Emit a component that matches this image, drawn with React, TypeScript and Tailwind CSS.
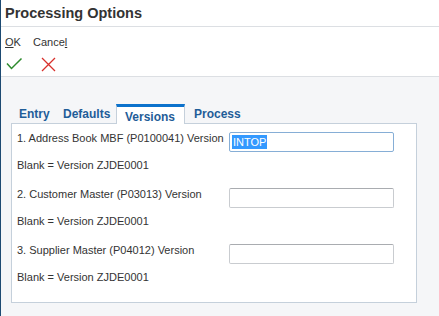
import React from "react";

const labelCls = "text-[11px] leading-[14px] text-[#333333]";

function Row({ label, value, focused }: { label: string; value?: string; focused?: boolean }) {
  return (
    <div className="flex flex-col">
      <div className="flex items-start h-[28px]">
        <div className={`${labelCls} w-[212px] pt-[6px]`}>{label}</div>
        <div
          className={`w-[165px] h-[20px] mt-[7px] rounded-[2px] bg-white flex items-center px-[2px] border shrink-0 ${
            focused ? "border-[#86aed6]" : "border-[#c9ccd0] border-t-[#a9acb0]"
          }`}
        >
          {value ? (
            <span className="bg-[#3399ff] text-white text-[11px] leading-[14px] px-[1px]">{value}</span>
          ) : null}
        </div>
      </div>
      <div className={`${labelCls} h-[28px] pt-[5px]`}>Blank = Version ZJDE0001</div>
    </div>
  );
}

export default function App() {
  return (
    <div className="w-[439px] h-[316px] bg-[#f5f6f8] border-l border-[#1d4a72] flex flex-col font-['Liberation_Sans',Arial,sans-serif] overflow-hidden">
      <div className="bg-white h-[27px] border-b border-[#dcdfe3] pl-[4px] flex items-center">
        <span className="text-[14.5px] font-bold text-[#333333] leading-none pt-[1px]">Processing Options</span>
      </div>
      <div className="bg-white h-[50px] border-b border-[#dcdfe3] pl-[4px] pt-[9px]">
        <div className="flex text-[11px] leading-[12px] text-[#333333]">
          <span className="w-[28px]">
            <span className="underline">O</span>K
          </span>
          <span>
            Cance<span className="underline">l</span>
          </span>
        </div>
        <div className="flex mt-[8px] h-[16px] items-center">
          <svg width="17" height="14" viewBox="0 0 17 14" className="ml-[1px]">
            <path d="M1 6.5 L5.5 11.5 L15.5 1.5" stroke="#2c8a2c" strokeWidth="1.5" fill="none" />
          </svg>
          <svg width="15" height="15" viewBox="0 0 15 15" className="ml-[18px]">
            <path d="M1 1 L14 14 M14 1 L1 14" stroke="#d8302c" strokeWidth="1.3" fill="none" />
          </svg>
        </div>
      </div>
      <div className="pl-[10px] pt-[26px]">
        <div className="flex items-end h-[20px] text-[12px] font-bold text-[#1f5d98]">
          <div className="pl-[8px] w-[52px]">Entry</div>
          <div className="w-[53px]">Defaults</div>
          <div className="w-[69px] h-[20px] bg-white border-x border-t-[3px] border-[#c5d0db] border-t-[#0c72cc] -mb-px relative z-10 pl-[8px] pt-[1px]">
            Versions
          </div>
          <div className="pl-[9px]">Process</div>
        </div>
        <div className="w-[406px] h-[180px] bg-white border border-[#c5d0db] pl-[5px] pt-[1px]">
          <Row label="1. Address Book MBF (P0100041) Version" value="INTOP" focused />
          <Row label="2. Customer Master (P03013) Version" />
          <Row label="3. Supplier Master (P04012) Version" />
        </div>
      </div>
    </div>
  );
}
